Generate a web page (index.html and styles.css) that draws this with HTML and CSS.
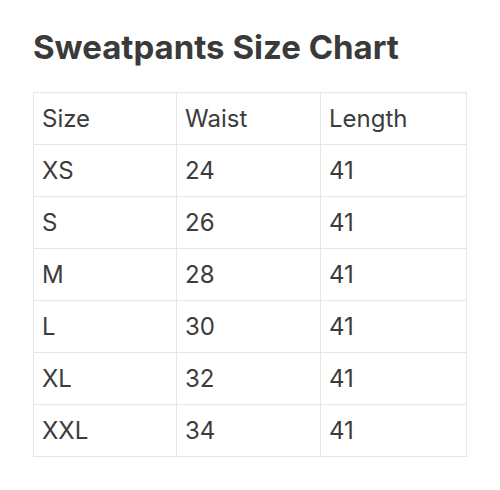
FILE: index.html
```html
<!DOCTYPE html>
<html>
<head>
<meta charset="utf-8">
<link rel="stylesheet" href="styles.css">
</head>
<body>
<div class="page">
  <h1 class="title">Sweatpants Size Chart</h1>
  <table class="chart">
    <colgroup>
      <col class="c1"><col class="c2"><col class="c3">
    </colgroup>
    <tr><td>Size</td><td>Waist</td><td>Length</td></tr>
    <tr><td>XS</td><td>24</td><td>41</td></tr>
    <tr><td>S</td><td>26</td><td>41</td></tr>
    <tr><td>M</td><td>28</td><td>41</td></tr>
    <tr><td>L</td><td>30</td><td>41</td></tr>
    <tr><td>XL</td><td>32</td><td>41</td></tr>
    <tr><td>XXL</td><td>34</td><td>41</td></tr>
  </table>
</div>
</body>
</html>
```
FILE: styles.css
```css
html, body {
  margin: 0;
  padding: 0;
  background: #ffffff;
}
.page {
  padding: 27px 33px 0 33px;
  font-family: Inter, "Noto Sans", sans-serif;
  color: #3a3a3a;
}
.title {
  margin: 0 0 25px 0;
  font-size: 33px;
  line-height: 40px;
  font-weight: 700;
  color: #3a3a3a;
  letter-spacing: 0;
}
.chart {
  width: 434px;
  border-collapse: collapse;
  table-layout: fixed;
}
.c1 { width: 143px; }
.c2 { width: 144px; }
.chart td {
  border: 1px solid #e6e6e6;
  height: 52px;
  padding: 0 0 0 8px;
  font-size: 24px;
  font-weight: 400;
  color: #3c3c3c;
  vertical-align: middle;
  box-sizing: border-box;
}
```
